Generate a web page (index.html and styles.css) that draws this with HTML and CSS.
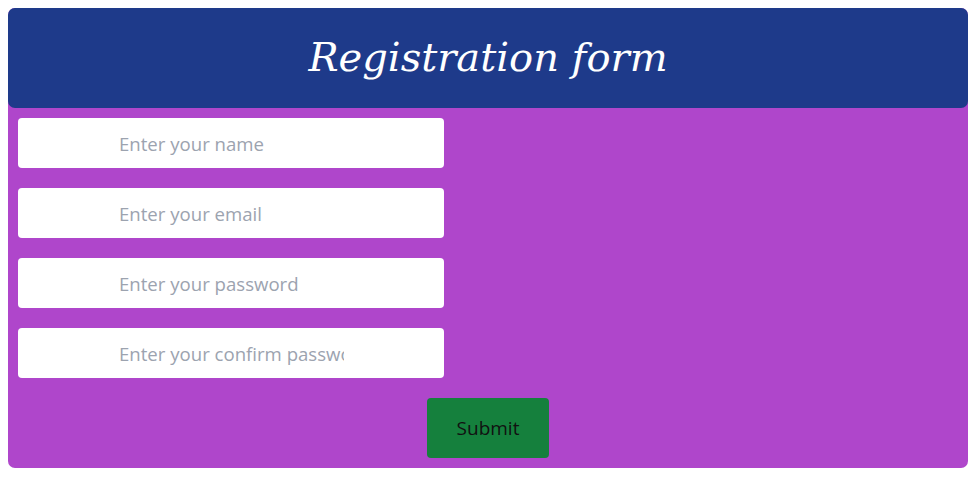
FILE: index.html
```html
<!DOCTYPE html>
<html>
<head>
<meta charset="utf-8">
<link rel="stylesheet" href="styles.css">
</head>
<body>
<form class="card">
  <div class="header"><h1 class="title">Registration form</h1></div>
  <div class="fields">
    <input class="field" type="text" placeholder="Enter your name">
    <input class="field" type="email" placeholder="Enter your email">
    <input class="field" type="password" placeholder="Enter your password">
    <input class="field" type="password" placeholder="Enter your confirm password">
  </div>
  <div class="actions"><button class="submit" type="button">Submit</button></div>
</form>
</body>
</html>
```
FILE: styles.css
```css
html, body { margin: 0; padding: 0; background: #fff; }
body { padding: 8px; }
.card {
  background: #af46cb;
  border-radius: 7px;
  width: 960px;
  height: 460px;
  box-sizing: border-box;
  padding-bottom: 10px;
  display: flex;
  flex-direction: column;
}
.header {
  background: #1e3a8a;
  border-radius: 7px;
  height: 100px;
  display: flex;
  align-items: center;
  justify-content: center;
}
.title {
  margin: 0;
  color: #fff;
  font-family: "DejaVu Serif", serif;
  font-style: italic;
  font-weight: normal;
  font-size: 40px;
  padding-bottom: 2px;
}
.fields {
  display: flex;
  flex-direction: column;
  gap: 20px;
  padding: 10px 10px 0;
}
.field {
  width: 426px;
  height: 50px;
  box-sizing: border-box;
  border: none;
  border-radius: 4px;
  background: #fff;
  padding: 0 100px 0 101px;
  font-family: "Open Sans", sans-serif;
  font-size: 18.6px;
  color: #111;
  outline: none;
}
.field::placeholder { color: #9ca3af; }
.actions {
  display: flex;
  justify-content: center;
  padding-top: 20px;
}
.submit {
  width: 122px;
  height: 60px;
  background: #15803d;
  border: none;
  border-radius: 4px;
  font-family: "Open Sans", sans-serif;
  font-size: 19px;
  color: #111;
  padding: 0;
}
```
